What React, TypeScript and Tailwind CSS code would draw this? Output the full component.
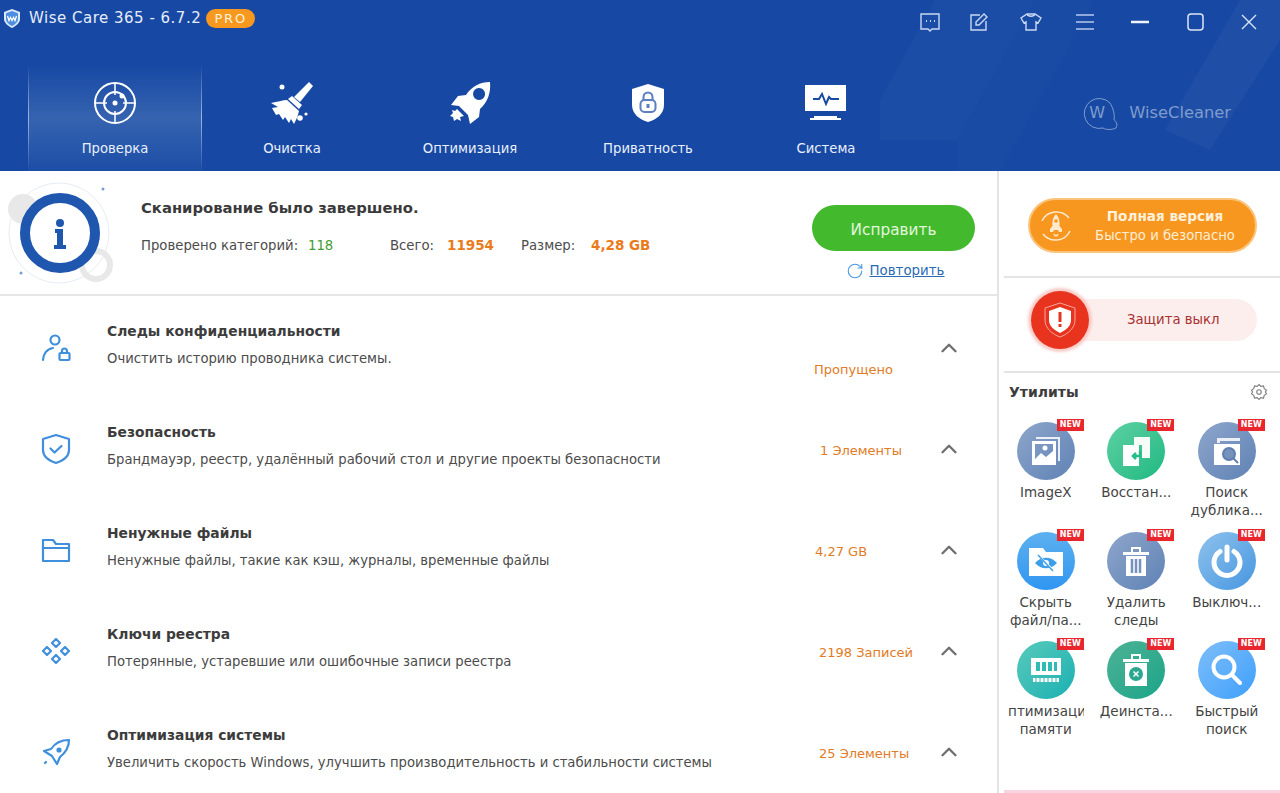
import type { ReactNode } from "react";
import { ChevronUp, RotateCw } from "lucide-react";

type Row = {
  title: string;
  desc: string;
  status: string;
  statusClass: string;
  icon: ReactNode;
};

type Tool = {
  label: string;
  second?: string;
  circle: string;
  glyph: ReactNode;
};

const lineIcon = {
  fill: "none",
  stroke: "#3f8fdc",
  strokeWidth: 2.200,
  strokeLinecap: "round" as const,
  strokeLinejoin: "round" as const,
};

const rows: Row[] = [
  {
    title: "Следы конфиденциальности",
    desc: "Очистить историю проводника системы.",
    status: "Пропущено",
    statusClass: "ml-0 mt-[40px]",
    icon: (
      <svg width="30" height="30" viewBox="0 0 30 30" {...lineIcon}>
        <circle cx="14" cy="7" r="4.500" />
        <path d="M2 27c0-6 4-11 10-12" />
        <rect x="18.500" y="20" width="10" height="7" rx="1" />
        <path d="M21 20v-2a2.500 2.500 0 0 1 5 0v2" />
      </svg>
    ),
  },
  {
    title: "Безопасность",
    desc: "Брандмауэр, реестр, удалённый рабочий стол и другие проекты безопасности",
    status: "1 Элементы",
    statusClass: "ml-[6px]",
    icon: (
      <svg width="30" height="32" viewBox="0 0 30 32" {...lineIcon}>
        <path d="M15 2l13 4v11c0 7-7 11-13 13C9 28 2 24 2 17V6z" />
        <path d="M9.500 15.500l4 4 7-6.500" />
      </svg>
    ),
  },
  {
    title: "Ненужные файлы",
    desc: "Ненужные файлы, такие как кэш, журналы, временные файлы",
    status: "4,27 GB",
    statusClass: "ml-[1px]",
    icon: (
      <svg width="30" height="28" viewBox="0 0 30 28" {...lineIcon}>
        <path d="M2 4h10l3 4h13v17H2z" />
        <path d="M2 12h26" />
      </svg>
    ),
  },
  {
    title: "Ключи реестра",
    desc: "Потерянные, устаревшие или ошибочные записи реестра",
    status: "2198 Записей",
    statusClass: "ml-[5px]",
    icon: (
      <svg width="30" height="30" viewBox="0 0 30 30" {...lineIcon}>
        <path d="M15 3l4 4-4 4-4-4z" />
        <path d="M6 11l4 4-4 4-4-4z" />
        <path d="M24 11l4 4-4 4-4-4z" />
        <path d="M15 19l4 4-4 4-4-4z" />
      </svg>
    ),
  },
  {
    title: "Оптимизация системы",
    desc: "Увеличить скорость Windows, улучшить производительность и стабильности системы",
    status: "25 Элементы",
    statusClass: "ml-[5px]",
    icon: (
      <svg width="30" height="30" viewBox="0 0 30 30" {...lineIcon}>
        <path d="M28 3c-7 0-14 3-18 9l-7 2 8 5 5 8 3-7c5-4 9-10 9-17z" />
        <circle cx="18" cy="13" r="1.500" fill="#3f8fdc" />
        <path d="M4 26l1-1" />
      </svg>
    ),
  },
];

const tools: Tool[] = [
  {
    label: "ImageX",
    circle: "bg-linear-to-br from-[#8ea6cb] to-[#5f82b5]",
    glyph: (
      <svg width="32" height="32" viewBox="0 0 32 32">
        <path d="M6 2h24v24h-2V4H6z" fill="#fff" opacity=".85" />
        <path d="M2 6h24v24H2zm3 3v15l6-6 5 4 7-6V9z" fill="#fff" fillRule="evenodd" />
        <circle cx="15" cy="13" r="2.500" fill="#fff" />
      </svg>
    ),
  },
  {
    label: "Восстан...",
    circle: "bg-linear-to-br from-[#5bd0a3] to-[#17b982]",
    glyph: (
      <svg width="32" height="32" viewBox="0 0 32 32">
        <path d="M14 2h16v21h-8V10h-8z" fill="#fff" opacity=".95" />
        <path d="M3 10h16v21H3z" fill="#fff" />
        <path d="M20 16v5h-7m3-3l-3 3 3 3" fill="none" stroke="#25bd8a" strokeWidth="2.500" />
      </svg>
    ),
  },
  {
    label: "Поиск",
    second: "дублика...",
    circle: "bg-linear-to-br from-[#8ea6cb] to-[#5f82b5]",
    glyph: (
      <svg width="32" height="32" viewBox="0 0 32 32">
        <path d="M6 3h23v3H9v2H6z" fill="#fff" opacity=".85" />
        <path d="M3 9h26v21H3z" fill="#fff" />
        <circle cx="18" cy="19" r="6" fill="#7592bd" stroke="#5f7fb0" strokeWidth="2" />
        <path d="M22 23l5 5" stroke="#5f7fb0" strokeWidth="2" />
      </svg>
    ),
  },
  {
    label: "Скрыть",
    second: "файл/па...",
    circle: "bg-linear-to-b from-[#5cb0ee] to-[#2f96f2]",
    glyph: (
      <svg width="36" height="32" viewBox="0 0 36 32">
        <path d="M1 3h14l3 4h17v24H1z" fill="#fff" />
        <path d="M7 18c6-7 16-7 22 0-6 7-16 7-22 0z" fill="#3d9eea" />
        <circle cx="18" cy="18" r="3" fill="#fff" />
        <path d="M11 11l14 14" stroke="#fff" strokeWidth="2" />
        <path d="M10 10l15 16" stroke="#3d9eea" strokeWidth="1.500" />
      </svg>
    ),
  },
  {
    label: "Удалить",
    second: "следы",
    circle: "bg-linear-to-br from-[#8ea6cb] to-[#5f82b5]",
    glyph: (
      <svg width="28" height="32" viewBox="0 0 28 32">
        <path d="M1 7h26v3H1zM9 2h10v5h-2V4h-6v3H9z" fill="#fff" />
        <path d="M4 11h20v20H4z" fill="#fff" />
        <path d="M10 14v14M14 14v14M18 14v14" stroke="#7591bc" strokeWidth="2.500" />
      </svg>
    ),
  },
  {
    label: "Выключ...",
    circle: "bg-linear-to-br from-[#8ec2ec] to-[#4596e0]",
    glyph: (
      <svg width="32" height="34" viewBox="0 0 32 34" fill="none" stroke="#fff" strokeLinecap="round">
        <path d="M9 7.500a13 13 0 1 0 14 0" strokeWidth="5" />
        <path d="M16 3v13" strokeWidth="5" />
      </svg>
    ),
  },
  {
    label: "Оптимизация",
    second: "памяти",
    circle: "bg-linear-to-br from-[#55cabb] to-[#12b0b2]",
    glyph: (
      <svg width="32" height="26" viewBox="0 0 32 26">
        <path d="M1 1h30v17H1z" fill="#fff" />
        <path d="M6 5h4v9H6zM12 5h4v9h-4zM18 5h4v9h-4zM24 5h3v9h-3z" fill="#2fbcb5" />
        <path d="M3 21h26v4H3z" fill="#fff" />
        <path d="M6 21v4M10 21v4M14 21v4M18 21v4M22 21v4M26 21v4" stroke="#2fbcb5" />
      </svg>
    ),
  },
  {
    label: "Деинста...",
    circle: "bg-linear-to-br from-[#4bb295] to-[#12a589]",
    glyph: (
      <svg width="28" height="34" viewBox="0 0 28 34">
        <path d="M1 6h26v3H1zM9 1h10v5h-2V3h-6v3H9z" fill="#fff" />
        <path d="M3 10h22v23H3z" fill="#fff" />
        <circle cx="14" cy="21" r="7" fill="#2ba78f" />
        <path d="M11.500 18.500l5 5m0-5l-5 5" stroke="#fff" strokeWidth="1.500" />
      </svg>
    ),
  },
  {
    label: "Быстрый",
    second: "поиск",
    circle: "bg-linear-to-br from-[#7dbefa] to-[#3c9ffb]",
    glyph: (
      <svg width="32" height="32" viewBox="0 0 32 32" fill="none" stroke="#fff">
        <circle cx="13" cy="13" r="10.500" strokeWidth="4" />
        <path d="M21 21l8 8" strokeWidth="4" strokeLinecap="round" />
      </svg>
    ),
  },
];

function NavRadar() {
  return (
    <svg width="44" height="44" viewBox="0 0 44 44" fill="none" stroke="#fff" strokeWidth="2">
      <circle cx="22" cy="22" r="20" />
      <circle cx="22" cy="22" r="11" />
      <path d="M22 2v12M22 30v12M2 22h12M30 22h12" strokeWidth="1.500" />
      <circle cx="22" cy="22" r="2.500" fill="#fff" stroke="none" />
      <circle cx="29" cy="15" r="2.500" fill="#fff" stroke="none" />
    </svg>
  );
}

function NavBroom() {
  return (
    <svg width="44" height="44" viewBox="0 0 44 44" fill="#fff">
      <path d="M39 1l4 4-13 16-6-5z" />
      <path d="M22 15l10 9-3 4-11-10z" />
      <path d="M17 19l12 11c-1 5-3 9-5 13l-3-5-2 4-4-6-2 3-4-6-3 1-4-7 6-1-7-4c6-1 12-3 16-3z" />
      <circle cx="12" cy="6" r="2.500" />
      <circle cx="30" cy="37" r="2.800" />
      <circle cx="36" cy="33" r="1.600" />
    </svg>
  );
}

function NavRocket() {
  return (
    <svg width="44" height="44" viewBox="0 0 44 44" fill="#fff">
      <path
        fillRule="evenodd"
        d="M42 1c1 10-2 20-10 27l-1 8-9 7-2-9-9-9-8-1 7-9 8-1C24 5 32 1 42 1zM31 7a6 6 0 1 0 .1 0z"
      />
      <path d="M9 28l7 7-4 1 1 4-4-2-3 2-1-4-3-1 3-3-1-3 3 1z" />
    </svg>
  );
}

function NavShield() {
  return (
    <svg width="36" height="40" viewBox="0 0 36 40">
      <path d="M18 1l16 5v16c0 9-8 15-16 17C10 37 2 31 2 22V6z" fill="#fff" />
      <rect x="10.500" y="17" width="15" height="12" rx="4" fill="none" stroke="#5b7fc0" strokeWidth="2" />
      <path d="M13.500 17v-3a4.500 4.500 0 0 1 9 0v3" fill="none" stroke="#5b7fc0" strokeWidth="2" />
      <rect x="16.500" y="21" width="3" height="4" fill="#5b7fc0" />
    </svg>
  );
}

function NavMonitor() {
  return (
    <svg width="42" height="36" viewBox="0 0 42 36">
      <path d="M0 0h41v26H0z" fill="#fff" />
      <path d="M8 14h6l3-5 4 10 3-7 2 2h8" fill="none" stroke="#174aa3" strokeWidth="2" />
      <path d="M9 31h23v2H9z" fill="#fff" />
      <path d="M5 33h31v2H5z" fill="#fff" />
    </svg>
  );
}

const navItems = [
  { label: "Проверка", icon: <NavRadar />, active: true },
  { label: "Очистка", icon: <NavBroom />, active: false },
  { label: "Оптимизация", icon: <NavRocket />, active: false },
  { label: "Приватность", icon: <NavShield />, active: false },
  { label: "Система", icon: <NavMonitor />, active: false },
];

function TopBar() {
  const icon = { fill: "none", stroke: "#c9d8f2", strokeWidth: 1.4 };
  return (
    <div className="relative z-10 flex h-[65px] items-start justify-between">
      <div className="flex items-center pl-[3px] pt-[7px]">
        <svg width="18" height="19" viewBox="0 0 18 19">
          <path d="M9 0l8 3v7c0 4-4 7-8 9-4-2-8-5-8-9V3z" fill="#dfe8f8" />
          <path d="M9 2l6 2.200V10c0 3-3 5.500-6 7-3-1.500-6-4-6-7V4.200z" fill="#4d8ee0" />
          <path d="M4.500 7l1.500 4.500L7.500 8.500 9 11.500l1.500-3 1.500 3L13.500 7" fill="none" stroke="#fff" strokeWidth="1.300" />
        </svg>
        <span className="ml-[8px] text-[15px] tracking-[0.5px] text-[#e6edf9]">Wise Care 365 - 6.7.2</span>
        <span className="ml-[5px] flex h-[19px] w-[49px] items-center justify-center rounded-full bg-[#f7991f] text-[13px] tracking-[1.800px] text-[#fff3dd]">
          PRO
        </span>
      </div>
      <div className="flex items-center pr-[23px] pt-[11px]">
        <svg width="22" height="22" viewBox="0 0 22 22" {...icon} className="mr-[28px]">
          <path d="M2 3h18v15h-7l-2 2-2-2H2z" />
          <path d="M7 10h1M11 10h1M15 10h1" strokeWidth="2" />
        </svg>
        <svg width="20" height="20" viewBox="0 0 20 20" {...icon} className="mr-[31px]">
          <path d="M11 3H2v15h15V9" />
          <path d="M7 10l8-8 3 3-8 8-3 0z" />
        </svg>
        <svg width="22" height="20" viewBox="0 0 22 20" {...icon} className="mr-[34px]">
          <path d="M7 2h8l6 4-3 5-2-1v8H6v-8l-2 1-3-5z" />
          <path d="M7 2c1 3 7 3 8 0" />
        </svg>
        <svg width="18" height="18" viewBox="0 0 18 18" fill="none" stroke="#8ea8d9" strokeWidth="2" className="mr-[37px]">
          <path d="M0 2h18M0 9h18M0 16h18" />
        </svg>
        <svg width="18" height="18" viewBox="0 0 18 18" fill="none" stroke="#f1f5fc" strokeWidth="2.500" className="mr-[38px]">
          <path d="M0 9h18" />
        </svg>
        <svg width="17" height="18" viewBox="0 0 17 18" fill="none" stroke="#dbe5f6" strokeWidth="1.500" className="mr-[37px]">
          <rect x="1" y="1" width="15" height="16" rx="3" />
        </svg>
        <svg width="16" height="16" viewBox="0 0 16 16" fill="none" stroke="#dbe5f6" strokeWidth="1.400">
          <path d="M1 1l14 14M15 1L1 15" />
        </svg>
      </div>
    </div>
  );
}

function Header() {
  return (
    <header className="relative h-[171px] overflow-hidden bg-[#1749a4] font-['DejaVu_Sans',sans-serif]">
      {/* glare streaks, top right */}
      <svg className="absolute inset-0" width="1280" height="171" viewBox="0 0 1280 171">
        <path d="M880 100L935 0h100L957 140h-77z" fill="#fff" opacity=".025" />
        <path d="M957 140L1035 0h60L1000 171h-43z" fill="#fff" opacity=".012" />
        <path d="M1165 130L1240 0h40v40l-70 110z" fill="#fff" opacity=".03" />
      </svg>
      <TopBar />
      <div className="relative flex h-[106px] pl-[25px]">
        {navItems.map((item) => (
          <div
            key={item.label}
            className={
              item.active
                ? "relative ml-[3px] mr-px flex w-[174px] flex-col items-center bg-linear-to-b from-[#1749a4] via-[#3563b0] to-[#1c4ea6]"
                : "flex w-[178px] flex-col items-center"
            }
          >
            {item.active && (
              <>
                <span className="absolute inset-y-0 left-0 w-px bg-linear-to-b from-transparent via-[#9db5de] to-transparent" />
                <span className="absolute inset-y-0 right-0 w-px bg-linear-to-b from-transparent via-[#9db5de] to-transparent" />
              </>
            )}
            <div className="flex h-[75px] items-center">{item.icon}</div>
            <span className="text-[13.200px] leading-[18px] text-[#e9f0fb]">{item.label}</span>
          </div>
        ))}
        <div className="ml-auto mr-[49px] flex h-[64px] items-center pt-[32px]">
          <svg width="36" height="33" viewBox="0 0 36 33" fill="none" stroke="#7f9ccd" strokeWidth="1">
            <path d="M28 6a15 15 0 1 0-7 25c3 2 9 2 13 0 2-4 0-7-2-8 1-6-1-12-4-17z" />
          </svg>
          <span className="-ml-[29px] mr-[24px] w-[16px] text-[16px] text-[#7f9ccd]">W</span>
          <span className="text-[16.300px] text-[#7f9ccd]">WiseCleaner</span>
        </div>
      </div>
    </header>
  );
}

function ScanSummary() {
  return (
    <section className="relative flex h-[125px] items-start border-b-2 border-[#e6e6e6]">
      <svg width="110" height="110" viewBox="0 0 110 110" className="ml-[6px] mt-[10px] shrink-0">
        <circle cx="53" cy="52" r="50" fill="none" stroke="#e6ebf6" strokeWidth="1" />
        <circle cx="17" cy="28" r="15" fill="#e8e8e8" />
        <circle cx="90" cy="84" r="14" fill="none" stroke="#e8e8e8" strokeWidth="6" />
        <circle cx="54" cy="52" r="40" fill="#fff" />
        <circle cx="54" cy="52" r="35" fill="#fff" stroke="#1f56ae" strokeWidth="10" />
        <circle cx="54" cy="42" r="4" fill="#1f56ae" />
        <path d="M49 48h8v16h3v4H48v-4h3V52h-2z" fill="#1f56ae" />
        <circle cx="97" cy="8" r="1.500" fill="#7a9ad0" />
        <circle cx="15" cy="92" r="1.500" fill="#7a9ad0" />
      </svg>
      <div className="ml-[25px] pt-[26px]">
        <div className="text-[14.800px] font-bold leading-[22px] text-[#3a3a3a]">
          Сканирование было завершено.
        </div>
        <div className="mt-[17px] flex items-baseline text-[13.250px] leading-[18px] text-[#4c4c4c]">
          <span className="w-[167px]">Проверено категорий:</span>
          <span className="w-[82px] text-[#3f9e32]">118</span>
          <span className="w-[57px]">Всего:</span>
          <span className="w-[74px] text-[13.500px] font-bold text-[#ea7b1a]">11954</span>
          <span className="w-[70px]">Размер:</span>
          <span className="text-[13.500px] font-bold text-[#ea7b1a]">4,28 GB</span>
        </div>
      </div>
      <div className="ml-auto mr-[22px] flex w-[163px] flex-col items-center pt-[34px]">
        <div className="flex h-[46px] w-[163px] items-center justify-center rounded-full bg-[#43ba2e] pt-[4px] text-[15.300px] text-[#e4f6dc]">
          Исправить
        </div>
        <div className="ml-[4px] mt-[11px] flex items-center">
          <RotateCw size={18} strokeWidth={1.500} color="#4a98e4" className="mr-[5px]" />
          <span className="text-[13.400px] leading-[18px] text-[#2a6bb4] underline">Повторить</span>
        </div>
      </div>
    </section>
  );
}

function ScanRow({ row }: { row: Row }) {
  return (
    <div className="flex h-[101px] items-center">
      <div className="flex w-[107px] shrink-0 justify-center pl-[5px] pt-[2px]">{row.icon}</div>
      <div className="w-[707px] shrink-0 pb-[4px]">
        <div className="text-[13.850px] font-bold leading-[20px] text-[#3c3c3c]">{row.title}</div>
        <div className="mt-[8px] text-[13.200px] leading-[20px] text-[#4c4c4c]">{row.desc}</div>
      </div>
      <div className="w-[122px] shrink-0 pt-[6px]">
        <span className={`block text-[13px] leading-[18px] text-[#e27b25] ${row.statusClass}`}>{row.status}</span>
      </div>
      <ChevronUp size={26} strokeWidth={2.200} color="#6f6f6f" className="mt-[2px] shrink-0" />
    </div>
  );
}

function ToolTile({ tool }: { tool: Tool }) {
  return (
    <div className="flex h-[109.500px] w-[90.500px] flex-col items-center">
      <div className="relative">
        <div className={`flex h-[58px] w-[58px] items-center justify-center rounded-full ${tool.circle}`}>
          {tool.glyph}
        </div>
        <span className="absolute -right-[9px] -top-[3px] flex h-[12px] w-[27px] items-center justify-center bg-[#e9262e] text-[8px] font-bold leading-none text-white">
          NEW
        </span>
      </div>
      <div className="mt-[3px] flex w-[76px] flex-col items-center overflow-hidden text-[13.500px] leading-[18px] text-[#444]">
        <span className="whitespace-nowrap">{tool.label}</span>
        {tool.second && <span className="whitespace-nowrap">{tool.second}</span>}
      </div>
    </div>
  );
}

function Sidebar() {
  return (
    <aside className="flex w-[283px] shrink-0 flex-col border-l-2 border-[#e4e4e4] pl-[5px]">
      <div className="h-[107px] border-b-2 border-[#e4e4e4] pl-[24px] pt-[27px]">
        <div className="flex h-[55px] w-[229px] items-center rounded-full border-2 border-[#fbc47d] bg-[#f7971f] pl-[9px]">
          <svg width="34" height="34" viewBox="0 0 34 34" fill="none" stroke="#fde9cb" strokeWidth="1.500">
            <path d="M30 9A16 16 0 0 0 3 12M4 25a16 16 0 0 0 27-3" />
            <path d="M17 5c3 3 4 7 3.500 12l2.500 3v3h-3l-1-2h-4l-1 2h-3v-3l2.500-3C13 12 14 8 17 5z" fill="#fde9cb" stroke="none" />
            <circle cx="17" cy="12" r="1.800" fill="#f7971f" stroke="none" />
            <path d="M15 25c1 2.500 3 2.500 4 0" />
          </svg>
          <div className="ml-[9px] flex flex-1 flex-col items-center pr-[7px] pt-[1px]">
            <span className="text-[13.600px] font-bold leading-[20px] text-[#fff1dc]">Полная версия</span>
            <span className="whitespace-nowrap text-[13.200px] leading-[20px] text-[#fdeed7]">Быстро и безопасно</span>
          </div>
        </div>
      </div>
      <div className="h-[95px] border-b-2 border-[#e4e4e4] pl-[26px] pt-[21px]">
        <div className="flex h-[42px] w-[227px] items-center rounded-full bg-[#fdeeee]">
          <div className="ml-px flex h-[58px] w-[58px] shrink-0 items-center justify-center rounded-full bg-[#e8331f] shadow-[0_0_3px_3px_#f9c9c5]">
            <svg width="34" height="36" viewBox="0 0 34 36">
              <path d="M17 1l15 5v12c0 8-7 14-15 17C9 32 2 26 2 18V6z" fill="none" stroke="#f6a69b" strokeWidth="1" />
              <path d="M17 5l11 4v9c0 6-5 10-11 13C11 28 6 24 6 18V9z" fill="#fff" />
              <path d="M15.500 10h3v10h-3zM15.500 22h3v3h-3z" fill="#e8331f" />
            </svg>
          </div>
          <span className="ml-[38px] text-[13.250px] text-[#a8302f]">Защита выкл</span>
        </div>
      </div>
      <div className="flex h-[38px] items-center justify-between pl-[5px] pr-[12px]">
        <span className="text-[14px] font-bold text-[#3c3c3c]">Утилиты</span>
        <svg width="18" height="18" viewBox="0 0 24 24" fill="none" stroke="#808080" strokeWidth="1.500">
          <path d="M12 2l2.500 2.500 3.500-.5 1 3.500 3 2-1.500 2.500 1.500 2.500-3 2-1 3.500-3.500-.5L12 22l-2.500-2.500-3.500.5-1-3.500-3-2L3.500 12 2 9.500l3-2L6 4l3.500.5z" />
          <circle cx="12" cy="12" r="3" />
        </svg>
      </div>
      <div className="-ml-[5px] grid grid-cols-[repeat(3,90.500px)] pl-[1.500px] pt-[11px]">
        {tools.map((tool) => (
          <ToolTile key={tool.label} tool={tool} />
        ))}
      </div>
      <div className="mt-auto h-[3px] bg-[#f9d5e0]" />
    </aside>
  );
}

export default function App() {
  return (
    <div className="h-[793px] w-[1280px] overflow-hidden bg-white font-['DejaVu_Sans',sans-serif]">
      <Header />
      <div className="flex h-[622px]">
        <main className="w-[997px] shrink-0">
          <ScanSummary />
          {rows.map((row) => (
            <ScanRow key={row.title} row={row} />
          ))}
        </main>
        <Sidebar />
      </div>
    </div>
  );
}
